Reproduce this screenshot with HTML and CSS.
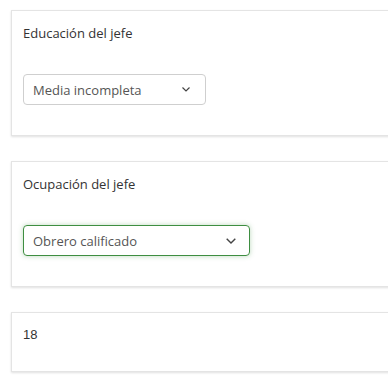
FILE: index.html
```html
<!DOCTYPE html>
<html lang="es">
<head>
    <meta charset="UTF-8">
    <meta name="viewport" content="width=device-width, initial-scale=1.0">
    <title>Formulario</title>
    <link rel="stylesheet" href="styles.css">
</head>
<body>
    <div class="card">
        <div class="label">Educación del jefe</div>
        <div class="select select-edu">
            <span>Media incompleta</span>
            <svg class="chev small" width="8" height="5" viewBox="0 0 8 5"><path d="M0.5 0.5 L4 4 L7.5 0.5" fill="none" stroke="#444" stroke-width="1.2"/></svg>
        </div>
    </div>

    <div class="card">
        <div class="label">Ocupación del jefe</div>
        <div class="select select-ocu focused">
            <span>Obrero calificado</span>
            <svg class="chev" width="10" height="6" viewBox="0 0 10 6"><path d="M0.7 0.7 L5 5 L9.3 0.7" fill="none" stroke="#444" stroke-width="1.4"/></svg>
        </div>
    </div>

    <div class="card card-short">
        <div class="value">18</div>
    </div>
</body>
</html>
```

FILE: styles.css
```css
html, body { overflow: hidden; }
body { margin: 0; padding: 10px 0 0 11px; background: #fff; font-family: "Open Sans", sans-serif; font-size: 13px; color: #333; }
.card { width: 400px; border: 1px solid #e4e4e4; box-shadow: 0 1px 2px rgba(0,0,0,0.12); padding: 12px 11px 30px; margin-bottom: 25px; background: #fff; }
.card-short { padding-bottom: 26px; }
.label { line-height: 20px; height: 20px; }
.value { line-height: 20px; font-family: "Liberation Sans", Arial, sans-serif; }
.select { margin-top: 31px; height: 31px; box-sizing: border-box; border: 1px solid #cfcfcf; border-radius: 4px; display: flex; align-items: center; justify-content: space-between; padding: 0 15px 0 9px; color: #555; }
.select-edu { width: 183px; }
.select-ocu { width: 227px; padding-right: 13px; }
.focused { border-color: #3e8e41; box-shadow: 0 0 5px rgba(62,142,65,0.35); }
.chev { display: block; }
```
